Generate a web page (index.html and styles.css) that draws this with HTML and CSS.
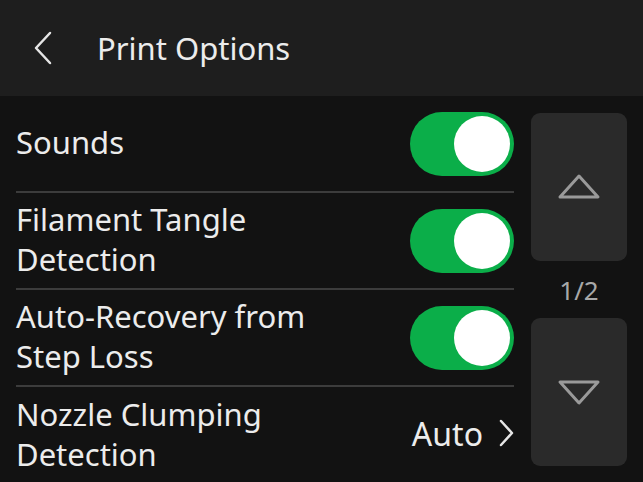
FILE: index.html
```html
<!DOCTYPE html>
<html lang="en">
<head>
    <meta charset="UTF-8">
    <title>Print Options</title>
    <link rel="stylesheet" href="styles.css">
</head>
<body>
    <div class="header">
        <svg class="back" width="20" height="34" viewBox="0 0 20 34">
            <path d="M17 2 L3 17 L17 32" fill="none" stroke="#e6e6e6" stroke-width="2.5" stroke-linecap="round" stroke-linejoin="round"/>
        </svg>
        <h1>Print Options</h1>
    </div>

    <div class="content">
        <div class="option-list">
            <div class="option-row">
                <span class="option-label">Sounds</span>
                <div class="toggle on"><div class="knob"></div></div>
            </div>
            <div class="option-row">
                <span class="option-label">Filament Tangle<br>Detection</span>
                <div class="toggle on"><div class="knob"></div></div>
            </div>
            <div class="option-row">
                <span class="option-label">Auto-Recovery from<br>Step Loss</span>
                <div class="toggle on"><div class="knob"></div></div>
            </div>
            <div class="option-row last">
                <span class="option-label">Nozzle Clumping<br>Detection</span>
                <span class="option-value">Auto
                    <svg width="16" height="28" viewBox="0 0 16 28">
                        <path d="M3 2 L14 14 L3 26" fill="none" stroke="#e6e6e6" stroke-width="2.5" stroke-linecap="round" stroke-linejoin="round"/>
                    </svg>
                </span>
            </div>
        </div>

        <div class="pager">
            <div class="page-btn">
                <svg width="44" height="28" viewBox="0 0 44 28">
                    <path d="M22 3 L41 24 L3 24 Z" fill="none" stroke="#9a9a9a" stroke-width="3" stroke-linejoin="round"/>
                </svg>
            </div>
            <div class="page-count">1/2</div>
            <div class="page-btn">
                <svg width="44" height="28" viewBox="0 0 44 28">
                    <path d="M3 4 L41 4 L22 25 Z" fill="none" stroke="#9a9a9a" stroke-width="3" stroke-linejoin="round"/>
                </svg>
            </div>
        </div>
    </div>
</body>
</html>
```

FILE: styles.css
```css
body {
    margin: 0;
    padding: 0;
    background: #121212;
    color: #ececec;
    font-family: 'Noto Sans', sans-serif;
    width: 643px;
    height: 482px;
    overflow: hidden;
}

.header {
    height: 96px;
    background: #1e1e1e;
    display: flex;
    align-items: center;
    padding-left: 33px;
    box-sizing: border-box;
}

.header .back {
    margin-right: 44px;
}

.header h1 {
    margin: 0;
    font-size: 31px;
    font-weight: 400;
    color: #ececec;
}

.content {
    display: flex;
    padding: 0 16px;
}

/* Option rows */
.option-list {
    width: 498px;
}

.option-row {
    height: 97px;
    box-sizing: border-box;
    border-bottom: 2px solid #3c3c3c;
    display: flex;
    align-items: center;
    justify-content: space-between;
}

.option-row.last {
    border-bottom: none;
}

.option-label {
    font-size: 31px;
    line-height: 40px;
    margin-top: -3px;
}

.toggle {
    width: 104px;
    height: 64px;
    border-radius: 32px;
    background: #0bae49;
    position: relative;
    flex-shrink: 0;
}

.toggle .knob {
    position: absolute;
    top: 4px;
    right: 4px;
    width: 56px;
    height: 56px;
    border-radius: 50%;
    background: #fff;
}

.option-value {
    font-size: 32px;
    display: flex;
    align-items: center;
    gap: 15px;
    margin-top: -5px;
}

/* Pager */
.pager {
    margin-left: 17px;
    padding-top: 17px;
    width: 96px;
}

.page-btn {
    height: 148px;
    background: #2a2a2a;
    border-radius: 9px;
    display: flex;
    align-items: center;
    justify-content: center;
}

.page-count {
    height: 57px;
    display: flex;
    align-items: center;
    justify-content: center;
    font-size: 26px;
    color: #a8a8a8;
}
```
